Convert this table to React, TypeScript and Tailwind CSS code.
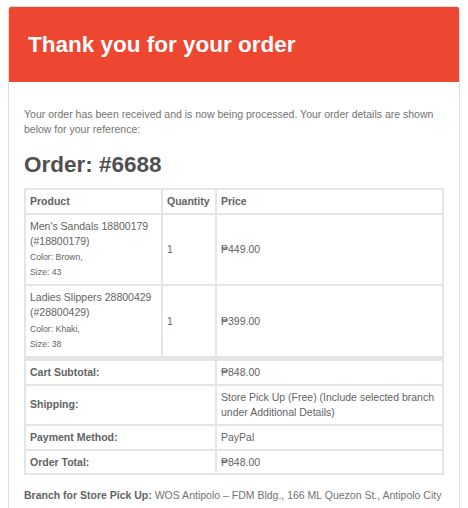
import React from "react";

const cell =
  "border border-[#e5e5e5] px-[4px] py-[4px] text-left align-middle font-normal";
const th =
  "border border-[#e5e5e5] px-[4px] py-[4px] text-left align-middle font-bold";

function Item({ name, sku, color, size, price }: { name: string; sku: string; color: string; size: string; price: string }) {
  return (
    <tr>
      <td className={cell}>
        <div>{name}</div>
        <div>({sku})</div>
        <div className="mt-[2px] text-[8.7px] leading-[15px]">
          <div>Color: {color},</div>
          <div>Size: {size}</div>
        </div>
      </td>
      <td className={cell}>1</td>
      <td className={cell}>{price}</td>
    </tr>
  );
}

export default function App() {
  return (
    <div className="min-h-[508px] bg-white pl-[8px] pt-[6px] font-['Liberation_Sans',Arial,sans-serif]">
      <div className="w-[452px] rounded-t-[3px] border border-[#dedede]">
        <div className="rounded-t-[2px] bg-[#ee4731] pl-[19px] pt-[24px] pb-[24px]">
          <h1 className="text-[22.5px] font-bold leading-[27px] text-white">
            Thank you for your order
          </h1>
        </div>
        <div className="px-[15px] pt-[25px] pb-[40px] text-[10.5px] leading-[1.4] text-[#737373]">
          <p>
            Your order has been received and is now being processed. Your order details are shown below for your reference:
          </p>
          <h2 className="mt-[13.5px] text-[22.5px] font-bold leading-[1.3] text-[#505050]">
            Order: #6688
          </h2>
          <table className="mt-[8.8px] w-[420px] table-fixed border-separate border-spacing-0 border border-[#e5e5e5] leading-[14.85px] text-[#636363]">
            <colgroup>
              <col className="w-[137px]" />
              <col className="w-[54px]" />
              <col className="w-[227px]" />
            </colgroup>
            <thead>
              <tr>
                <th className={th}>Product</th>
                <th className={th}>Quantity</th>
                <th className={th}>Price</th>
              </tr>
            </thead>
            <tbody>
              <Item name="Men's Sandals 18800179" sku="#18800179" color="Brown" size="43" price="₱449.00" />
              <Item name="Ladies Slippers 28800429" sku="#28800429" color="Khaki" size="38" price="₱399.00" />
            </tbody>
            <tfoot>
              <tr>
                <th colSpan={2} className={th + " border-t-[4px]"}>Cart Subtotal:</th>
                <td className={cell + " border-t-[4px]"}>₱848.00</td>
              </tr>
              <tr>
                <th colSpan={2} className={th}>Shipping:</th>
                <td className={cell}>
                  Store Pick Up (Free) (Include selected branch under Additional Details)
                </td>
              </tr>
              <tr>
                <th colSpan={2} className={th}>Payment Method:</th>
                <td className={cell}>PayPal</td>
              </tr>
              <tr>
                <th colSpan={2} className={th}>Order Total:</th>
                <td className={cell}>₱848.00</td>
              </tr>
            </tfoot>
          </table>
          <p className="mt-[12.5px]">
            <strong className="text-[#636363]">Branch for Store Pick Up:</strong>{" "}
            WOS Antipolo – FDM Bldg., 166 ML Quezon St., Antipolo City
          </p>
        </div>
      </div>
    </div>
  );
}
